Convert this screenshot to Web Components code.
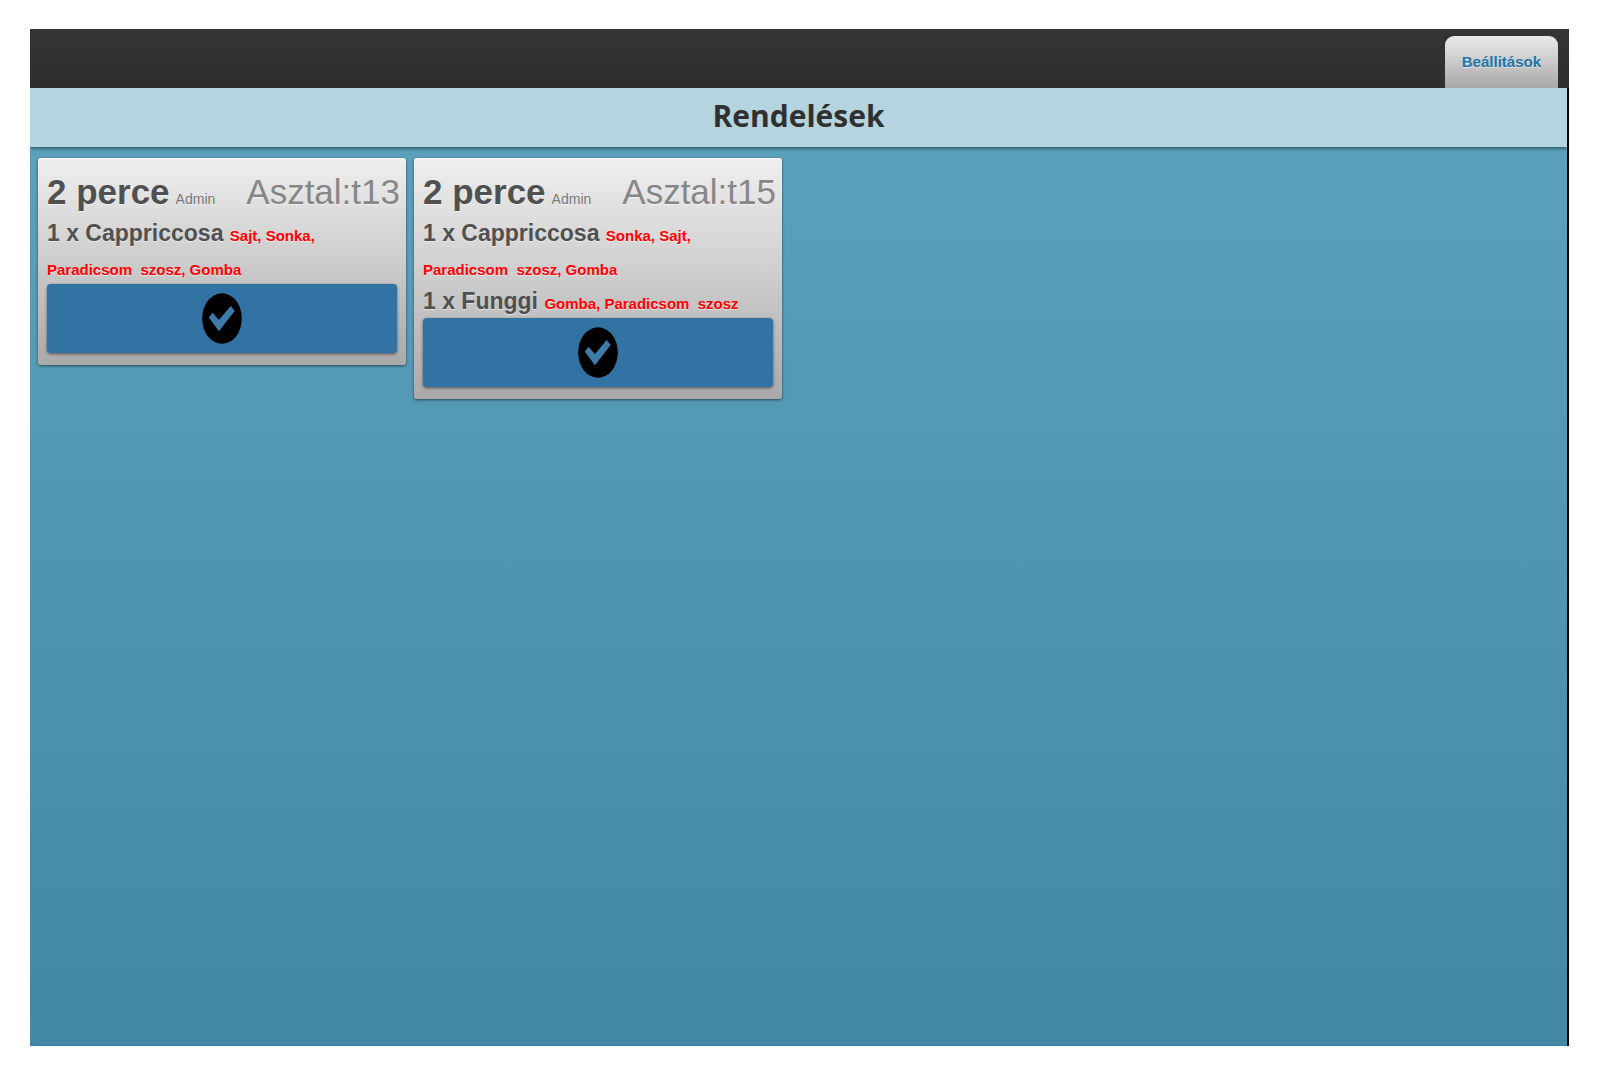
<!DOCTYPE html>
<html lang="hu">
<head>
<meta charset="utf-8">
<meta name="viewport" content="width=device-width, initial-scale=1">
<title>Rendelések</title>
<style>
    body
    {
        margin: 0;
        background: #fff;
        font-family: "Liberation Sans", Arial, sans-serif;
    }
</style>
</head>
<body>
<kitchen-app>
    <settings-tab slot="tabs" href="#settings">Beállitások</settings-tab>
    <span slot="title">Rendelések</span>
    <order-card minutes="2" user="Admin" table="t13">
        <order-item count="1" name="Cappriccosa">Sajt, Sonka, <br>Paradicsom  szosz, Gomba</order-item>
    </order-card>
    <order-card minutes="2" user="Admin" table="t15">
        <order-item count="1" name="Cappriccosa">Sonka, Sajt, <br>Paradicsom  szosz, Gomba</order-item>
        <order-item count="1" name="Funggi">Gomba, Paradicsom  szosz</order-item>
    </order-card>
</kitchen-app>

<script>
const makeTemplate = html =>
{
    const template = document.createElement('template');
    template.innerHTML = html;
    return template;
};

const appTemplate = makeTemplate(`
    <style>
        :host
        {
            display: flex;
            flex-direction: column;
            box-sizing: border-box;
            min-height: 100vh;
            padding: 29px 31px 34px 30px;
        }

        nav
        {
            display: flex;
            justify-content: flex-end;
            padding: 7px 11px 0;
            background: linear-gradient(#343434, #2e2e2e);
        }

        .page
        {
            flex: 1;
            display: flex;
            flex-direction: column;
            overflow: hidden;
            border-right: 2px solid #000;
        }

        header
        {
            padding-bottom: 4px;
            background: #b6d4df;
            box-shadow: 0 1px 4px #0009;
            z-index: 1;
        }

        h1
        {
            margin: 0;
            color: #303030;
            font: bold 30px/55px "Open Sans", "Noto Sans", sans-serif;
            text-align: center;
        }

        main
        {
            flex: 1;
            display: flex;
            flex-wrap: wrap;
            align-items: flex-start;
            align-content: flex-start;
            gap: 8px;
            padding: 11px 8px;
            background: linear-gradient(#5ba1bb, #4288a2);
            border-bottom: 1px solid #3a7fa9;
        }
    </style>
    <nav><slot name="tabs"></slot></nav>
    <div class="page">
        <header><h1><slot name="title"></slot></h1></header>
        <main><slot></slot></main>
    </div>
`);

const tabTemplate = makeTemplate(`
    <style>
        :host
        {
            display: block;
        }

        a
        {
            display: block;
            padding: 0 17px;
            border-radius: 9px 9px 0 0;
            background: linear-gradient(#e9e9e9, #cacaca 50%, #a8a8a8);
            color: #2074a8;
            font-size: 15px;
            font-weight: bold;
            line-height: 52px;
            text-decoration: none;
            text-shadow: 0 1px 0 #fff8;
        }
    </style>
    <a><slot></slot></a>
`);

const cardTemplate = makeTemplate(`
    <style>
        :host
        {
            display: block;
            box-sizing: border-box;
            width: 368px;
            padding: 10px 9px 12px;
            border-radius: 3px;
            background: linear-gradient(#efefef, #a9a9a9);
            box-shadow: 0 1px 3px #0008, inset 0 1px 0 #fff8;
            color: #505050;
            text-shadow: 0 1px 0 #fff8;
        }

        .head
        {
            display: flex;
            align-items: baseline;
            gap: 6px;
            margin-right: -3px;
            line-height: 48px;
            white-space: nowrap;
        }

        .age
        {
            font-size: 35px;
            font-weight: bold;
        }

        .user
        {
            color: #777;
            font-size: 14px;
            line-height: 1;
        }

        .table
        {
            margin-left: auto;
            color: #868686;
            font-size: 35px;
        }

        button
        {
            display: flex;
            align-items: center;
            justify-content: center;
            width: 100%;
            height: 69px;
            padding: 0;
            border: 0;
            border-radius: 4px;
            background: #3273a3;
            box-shadow: 0 1px 3px #0008;
            cursor: pointer;
        }

        svg
        {
            display: block;
        }
    </style>
    <div class="head">
        <span class="age"></span>
        <span class="user"></span>
        <span class="table"></span>
    </div>
    <slot></slot>
    <button type="button" aria-label="Kész">
        <svg width="40" height="51" viewBox="0 0 40 51" aria-hidden="true">
            <ellipse cx="20" cy="25.5" rx="19.8" ry="25.3" fill="#000"/>
            <path d="M6.8 24.5 L10.6 19.8 L16.9 27 L28.7 13 L32.7 18 L16.9 38.3 Z" fill="#3b7cab"/>
        </svg>
    </button>
`);

const itemTemplate = makeTemplate(`
    <style>
        :host
        {
            display: block;
            font-size: 23px;
            font-weight: bold;
            line-height: 34px;
        }

        .extras
        {
            color: #f00;
            font-size: 15px;
            line-height: 1;
            white-space: pre-wrap;
        }
    </style>
    <span class="name"></span>
    <span class="extras"><slot></slot></span>
`);

class KitchenApp extends HTMLElement
{
    constructor()
    {
        super();
        this.attachShadow({mode: 'open'}).appendChild(appTemplate.content.cloneNode(true));
    }
}

class SettingsTab extends HTMLElement
{
    constructor()
    {
        super();
        this.attachShadow({mode: 'open'}).appendChild(tabTemplate.content.cloneNode(true));
    }

    connectedCallback()
    {
        this.shadowRoot.querySelector('a').href = this.getAttribute('href');
    }
}

class OrderCard extends HTMLElement
{
    constructor()
    {
        super();
        this.attachShadow({mode: 'open'}).appendChild(cardTemplate.content.cloneNode(true));
        // a finished order leaves the board
        this.shadowRoot.querySelector('button').addEventListener('click', () => this.remove());
    }

    connectedCallback()
    {
        const find = selector => this.shadowRoot.querySelector(selector);

        find('.age').textContent = `${this.getAttribute('minutes')} perce`;
        find('.user').textContent = this.getAttribute('user');
        find('.table').textContent = `Asztal:${this.getAttribute('table')}`;
    }
}

class OrderItem extends HTMLElement
{
    constructor()
    {
        super();
        this.attachShadow({mode: 'open'}).appendChild(itemTemplate.content.cloneNode(true));
    }

    connectedCallback()
    {
        this.shadowRoot.querySelector('.name').textContent =
            `${this.getAttribute('count')} x ${this.getAttribute('name')}`;
    }
}

customElements.define('kitchen-app', KitchenApp);
customElements.define('settings-tab', SettingsTab);
customElements.define('order-card', OrderCard);
customElements.define('order-item', OrderItem);
</script>
</body>
</html>
